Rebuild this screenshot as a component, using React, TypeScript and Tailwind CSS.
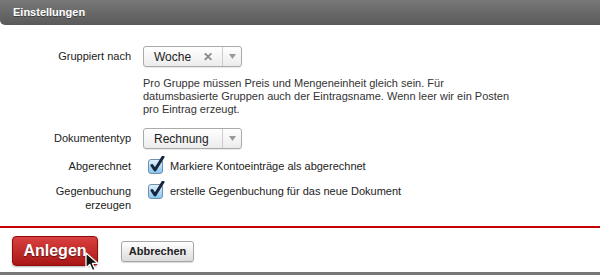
import React from 'react';

const Select: React.FC<{ value: string; clearable?: boolean }> = ({ value, clearable }) => (
  <div className="flex h-[21px] w-[99px] items-stretch rounded-[3px] border border-[#aaaaaa] bg-gradient-to-b from-white to-[#ececec] shadow-[0_1px_1px_rgba(0,0,0,0.08)]">
    <div className="flex flex-1 items-center pl-[10px] text-[12px] text-[#222]">
      <span className="flex-1">{value}</span>
      {clearable && <span className="mr-[9px] text-[12px] font-bold leading-none text-[#888]">✕</span>}
    </div>
    <div className="flex w-[19px] items-center justify-center border-l border-[#cccccc]">
      <svg width="7" height="5" viewBox="0 0 7 5">
        <path d="M0 0h7L3.5 5z" fill="#999" />
      </svg>
    </div>
  </div>
);

const Check: React.FC = () => (
  <div className="relative h-[15px] w-[15px] shrink-0 rounded-[3px] border border-[#6f8fae] bg-gradient-to-b from-[#dff1fd] to-[#88c6ef]">
    <svg className="absolute -top-[4px] left-[1px]" width="15" height="17" viewBox="0 0 15 17">
      <path d="M2 9.5l3 4.5L13 1" fill="none" stroke="#17253f" strokeWidth="3" strokeLinecap="round" strokeLinejoin="round" />
    </svg>
  </div>
);

const App: React.FC = () => {
  return (
    <div className="relative h-[275px] w-[600px] overflow-hidden bg-white font-['Liberation_Sans',Arial,sans-serif] text-[#222]">
      <div className="flex h-[25px] items-center rounded-bl-[5px] bg-gradient-to-b from-[#787878] to-[#5a5a5a] pl-[13px]">
        <span className="text-[11px] font-bold text-white [text-shadow:0_1px_0_rgba(0,0,0,0.4)]">Einstellungen</span>
      </div>

      <div className="grid grid-cols-[131px_1fr] gap-x-3 pt-[21px] text-[11px]">
        <div className="flex h-[21px] items-center justify-end">Gruppiert nach</div>
        <Select value="Woche" clearable />

        <div />
        <p className="mt-[10px] w-[368px] leading-[13px] text-[#333]">
          Pro Gruppe müssen Preis und Mengeneinheit gleich sein. Für
          <br />
          datumsbasierte Gruppen auch der Eintragsname. Wenn leer wir ein Posten pro Eintrag erzeugt.
        </p>

        <div className="mt-[12px] flex h-[21px] items-center justify-end">Dokumententyp</div>
        <div className="mt-[12px]">
          <Select value="Rechnung" />
        </div>

        <div className="mt-[7px] flex h-[20px] items-center justify-end">Abgerechnet</div>
        <div className="mt-[7px] flex h-[20px] items-center gap-[7px] pl-[5px]">
          <Check />
          <span>Markiere Kontoeinträge als abgerechnet</span>
        </div>

        <div className="mt-[8px] text-right leading-[14px]">
          Gegenbuchung
          <br />
          erzeugen
        </div>
        <div className="mt-[7px] flex h-[16px] items-center gap-[7px] pl-[5px]">
          <Check />
          <span>erstelle Gegenbuchung für das neue Dokument</span>
        </div>
      </div>

      <div className="absolute left-0 right-0 top-[226px] h-[2px] bg-[#c40000]" />

      <div className="absolute left-[12px] top-[236px] flex items-center gap-[23px]">
        <button className="h-[30px] w-[86px] rounded-[4px] border border-[#8e0d0d] bg-gradient-to-b from-[#d9403f] to-[#a91515] text-[16px] font-bold text-white shadow-[0_1px_2px_rgba(0,0,0,0.3)] [text-shadow:0_1px_1px_rgba(0,0,0,0.5)]">
          Anlegen
        </button>
        <button className="h-[21px] w-[73px] rounded-[3px] border border-[#a5a5a5] bg-gradient-to-b from-white to-[#dcdcdc] text-[11px] font-bold text-[#222] shadow-[0_1px_1px_rgba(0,0,0,0.15)]">
          Abbrechen
        </button>
      </div>

      <svg className="absolute left-[85px] top-[252px]" width="14" height="20" viewBox="0 0 14 20">
        <path d="M1 1v15l3.8-3.6 2.6 6.2 2.7-1.1-2.6-6.1H13z" fill="#111" stroke="#fff" strokeWidth="1.3" strokeLinejoin="round" />
      </svg>

      <div className="absolute bottom-0 left-0 right-0 h-[3px] bg-[#777]" />
    </div>
  );
};

export default App;
